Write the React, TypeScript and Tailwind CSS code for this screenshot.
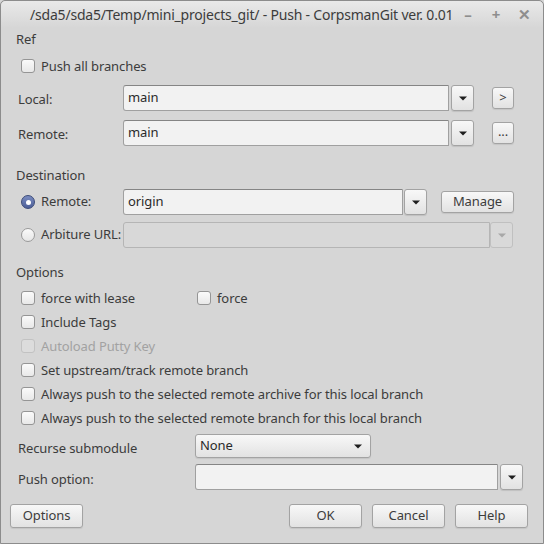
import React from "react";

const font = { fontFamily: '"Noto Sans", "Open Sans", sans-serif' };

function Arrow({ disabled = false }: { disabled?: boolean }) {
  return (
    <svg width="8" height="5" viewBox="0 0 8 5">
      <path d="M0 0.5 L8 0.5 L4 4.5 Z" fill={disabled ? "#a8a8a8" : "#1e1e1e"} />
    </svg>
  );
}

function Btn({ className = "", children }: { className?: string; children?: React.ReactNode }) {
  return (
    <div
      className={
        "flex items-center justify-center rounded-[3px] border border-[#a3a3a3] bg-gradient-to-b from-[#f8f8f8] to-[#e2e2e2] shadow-[0_1px_1px_rgba(0,0,0,0.08)] text-[13px] text-[#3c3c3c] " +
        className
      }
    >
      {children}
    </div>
  );
}

function DropBtn({ className = "", disabled = false }: { className?: string; disabled?: boolean }) {
  return (
    <div
      className={
        "flex items-center justify-center rounded-[3px] border " +
        (disabled
          ? "border-[#c0c0c0] bg-[#d9d9d9] "
          : "border-[#a3a3a3] bg-gradient-to-b from-[#f8f8f8] to-[#e2e2e2] shadow-[0_1px_1px_rgba(0,0,0,0.1)] ") +
        className
      }
    >
      <Arrow disabled={disabled} />
    </div>
  );
}

function Edit({ className = "", value = "", disabled = false }: { className?: string; value?: string; disabled?: boolean }) {
  return (
    <div
      className={
        "flex items-center rounded-l-[3px] border pl-[4px] text-[13px] text-[#2a2a2a] " +
        (disabled
          ? "border-[#b5b5b5] bg-[#d8d8d8] "
          : "border-[#a0a0a0] border-t-[#858585] bg-[#f2f2f2] ") +
        className
      }
    >
      {value}
    </div>
  );
}

function Check({ label, disabled = false, className = "" }: { label: string; disabled?: boolean; className?: string }) {
  return (
    <div className={"flex items-center h-[16px] " + className}>
      <div
        className={
          "w-[14px] h-[14px] rounded-[3px] border " +
          (disabled
            ? "border-[#c2c2c2] bg-[#dcdcdc]"
            : "border-[#959595] bg-gradient-to-b from-[#fafafa] to-[#e8e8e8]")
        }
      />
      <span className={"ml-[6px] text-[13px] leading-[16px] " + (disabled ? "text-[#a2a2a2]" : "text-[#3c3c3c]")}>
        {label}
      </span>
    </div>
  );
}

function Radio({ checked }: { checked: boolean }) {
  return checked ? (
    <div className="w-[14px] h-[14px] rounded-full border border-[#3b4a78] bg-gradient-to-b from-[#7b8cc0] to-[#4d5f98] flex items-center justify-center">
      <div className="w-[5px] h-[5px] rounded-full bg-white" />
    </div>
  ) : (
    <div className="w-[14px] h-[14px] rounded-full border border-[#9a9a9a] bg-gradient-to-b from-[#fafafa] to-[#e6e6e6]" />
  );
}

export default function App() {
  return (
    <div style={font} className="w-[544px] h-[544px] overflow-hidden bg-[#d6d6d6]">
      <div className="w-[544px] h-[544px] border border-[#8c8c8c] rounded-t-[5px] flex flex-col text-[#3c3c3c] tracking-[-0.1px]">
        {/* title bar */}
        <div className="h-[27px] flex items-center bg-gradient-to-b from-[#e9e9e9] to-[#d6d6d6] rounded-t-[5px]">
          <div className="pl-[29px] text-[14px] text-[#3c3c3c] whitespace-nowrap tracking-[-0.2px]">
            /sda5/sda5/Temp/mini_projects_git/ - Push - CorpsmanGit ver. 0.01
          </div>
          <div className="flex-1" />
          <div className="flex items-center text-[#8e8e8e] text-[15px] font-bold">
            <span className="w-[28px] text-center">–</span>
            <span className="w-[28px] text-center">+</span>
            <span className="w-[28px] text-center mr-[5px]">✕</span>
          </div>
        </div>

        <div className="flex flex-col">
          <div className="mt-[3px] h-[16px] leading-[16px] text-[13px] pl-[15px]">Ref</div>
          <Check label="Push all branches" className="mt-[11px] ml-[20px]" />

          {/* Local */}
          <div className="mt-[11px] h-[26px] flex items-center">
            <div className="w-[122px] pl-[17px] text-[13px] pt-[3px]">Local:</div>
            <Edit className="w-[326px] h-[26px]" value="main" />
            <DropBtn className="ml-[2px] w-[23px] h-[26px]" />
            <Btn className="ml-[18px] w-[22px] h-[22px] text-[12px]">&gt;</Btn>
          </div>
          {/* Remote */}
          <div className="mt-[9px] h-[26px] flex items-center">
            <div className="w-[122px] pl-[17px] text-[13px] pt-[3px]">Remote:</div>
            <Edit className="w-[326px] h-[26px]" value="main" />
            <DropBtn className="ml-[2px] w-[23px] h-[26px]" />
            <Btn className="ml-[18px] w-[22px] h-[22px] text-[12px] leading-none pb-[4px]">...</Btn>
          </div>

          <div className="mt-[21px] h-[16px] leading-[16px] text-[13px] pl-[15px]">Destination</div>

          {/* Dest remote */}
          <div className="mt-[6px] h-[26px] flex items-center">
            <div className="w-[122px] pl-[20px] flex items-center">
              <Radio checked />
              <span className="ml-[6px] text-[13px]">Remote:</span>
            </div>
            <Edit className="w-[280px] h-[26px]" value="origin" />
            <DropBtn className="ml-[1px] w-[23px] h-[26px]" />
            <Btn className="ml-[14px] w-[73px] h-[22px]">Manage</Btn>
          </div>
          {/* Arbiture */}
          <div className="mt-[7px] h-[26px] flex items-center">
            <div className="w-[122px] pl-[20px] flex items-center">
              <Radio checked={false} />
              <span className="ml-[6px] text-[13px] whitespace-nowrap">Arbiture URL:</span>
            </div>
            <Edit className="w-[367px] h-[26px]" disabled />
            <DropBtn className="ml-[0px] w-[23px] h-[26px]" disabled />
          </div>

          <div className="mt-[16px] h-[16px] leading-[16px] text-[13px] pl-[15px]">Options</div>

          <div className="mt-[10px] flex items-center">
            <Check label="force with lease" className="ml-[20px] w-[176px]" />
            <Check label="force" />
          </div>
          <Check label="Include Tags" className="mt-[8px] ml-[20px]" />
          <Check label="Autoload Putty Key" disabled className="mt-[8px] ml-[20px]" />
          <Check label="Set upstream/track remote branch" className="mt-[8px] ml-[20px]" />
          <Check label="Always push to the selected remote archive for this local branch" className="mt-[8px] ml-[20px]" />
          <Check label="Always push to the selected remote branch for this local branch" className="mt-[8px] ml-[20px]" />

          {/* Recurse */}
          <div className="mt-[8px] h-[24px] flex items-center">
            <div className="w-[194px] pl-[17px] text-[13px] pt-[6px]">Recurse submodule</div>
            <Btn className="w-[176px] h-[24px] !justify-between pl-[4px] pr-[8px]">
              <span className="text-[#2a2a2a]">None</span>
              <Arrow />
            </Btn>
          </div>
          {/* Push option */}
          <div className="mt-[6px] h-[26px] flex items-center">
            <div className="w-[194px] pl-[17px] text-[13px] pt-[6px]">Push option:</div>
            <Edit className="w-[303px] h-[26px]" />
            <DropBtn className="ml-[2px] w-[23px] h-[26px]" />
          </div>

          {/* Buttons */}
          <div className="mt-[14px] h-[24px] flex items-center">
            <Btn className="ml-[9px] w-[73px] h-[24px]">Options</Btn>
            <div className="flex-1" />
            <Btn className="w-[73px] h-[24px]">OK</Btn>
            <Btn className="ml-[10px] w-[73px] h-[24px]">Cancel</Btn>
            <Btn className="ml-[10px] mr-[15px] w-[73px] h-[24px]">Help</Btn>
          </div>
        </div>
      </div>
    </div>
  );
}
